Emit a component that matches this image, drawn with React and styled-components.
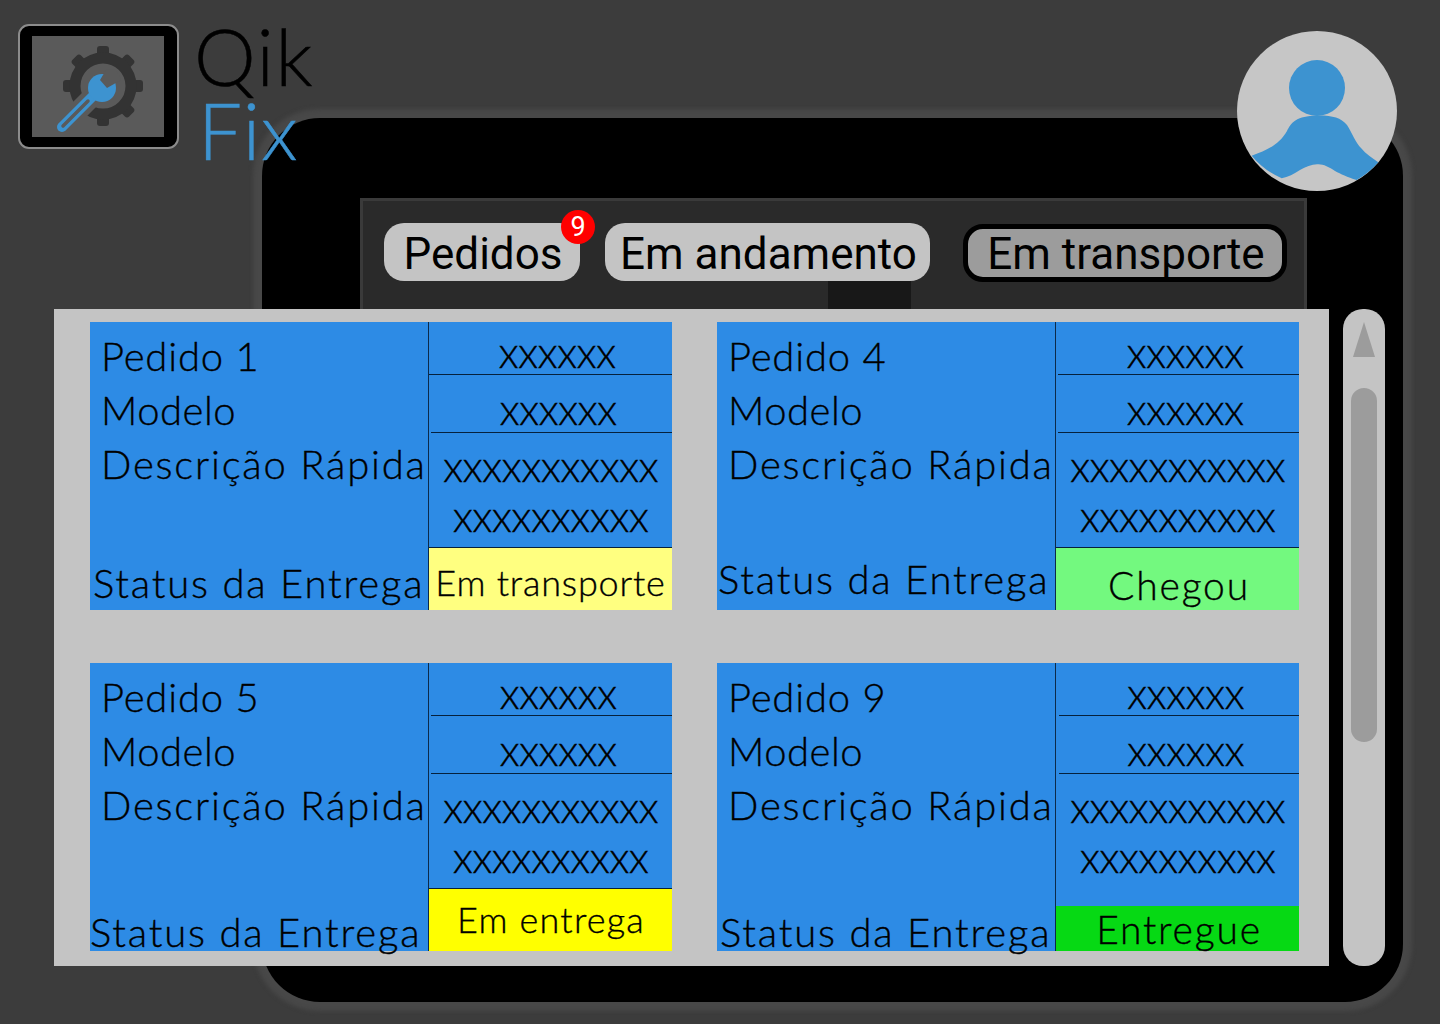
import React from "react";
import styled, { createGlobalStyle } from "styled-components";

const GlobalStyle = createGlobalStyle`
  html, body {
    margin: 0;
    padding: 0;
    background: #3c3c3c;
  }
  * {
    box-sizing: border-box;
  }
`;

const Page = styled.div`
  width: 1440px;
  height: 1024px;
  padding: 24px 43px 0 18px;
  background: #3c3c3c;
  overflow: hidden;
`;

const Header = styled.header`
  position: relative;
  z-index: 2;
  height: 167px;
  display: flex;
  justify-content: space-between;
  align-items: flex-start;
`;

const Brand = styled.div`
  display: flex;
  gap: 15px;
`;

const LogoFrame = styled.div`
  width: 161px;
  height: 125px;
  padding: 10px 13px 10px 12px;
  background: #000;
  border: 2px solid #8c8c8c;
  border-radius: 11px;
`;

const LogoScreen = styled.svg`
  display: block;
  width: 132px;
  height: 101px;
  background: #5a5a5a;
`;

const Wordmark = styled.div`
  font-family: "Lato", sans-serif;
  font-weight: 300;
  font-size: 78px;
  line-height: 74px;
  letter-spacing: 1.6px;
  margin-top: -5px;
  -webkit-text-stroke: 0.5px currentColor;
`;

const WordDark = styled.div`
  color: #000;
`;

const WordBlue = styled.div`
  color: #3d93d0;
  margin-left: 4px;
  letter-spacing: 1px;
`;

const Avatar = styled.svg`
  display: block;
  width: 160px;
  height: 160px;
  margin-top: 7px;
`;

const Device = styled.main`
  position: relative;
  width: 1141px;
  height: 884px;
  margin: -73px 0 0 244px;
  padding-top: 80px;
  background: #000;
  border-radius: 58px;
  box-shadow: 0 0 4px 9px #484848;
`;

const TabPanel = styled.nav`
  position: relative;
  width: 947px;
  height: 111px;
  margin-left: 98px;
  padding: 22px 0 0 21px;
  display: flex;
  align-items: flex-start;
  gap: 25px;
  background: #2a2a2a;
  border: 3px solid #3a3a3a;
  border-bottom: 0;
`;

const PanelStub = styled.div`
  position: absolute;
  left: 465px;
  bottom: 0;
  width: 83px;
  height: 28px;
  background: #181818;
`;

const Tab = styled.div`
  position: relative;
  height: 58px;
  width: ${(p) => p.$width}px;
  margin-left: ${(p) => p.$offset || 0}px;
  margin-top: ${(p) => (p.$active ? 1 : 0)}px;
  padding: ${(p) => (p.$active ? "2px" : "4px")} 0 0 2px;
  display: flex;
  align-items: center;
  justify-content: center;
  border-radius: 20px;
  border: ${(p) => (p.$active ? "5px solid #000" : "0")};
  background: ${(p) => (p.$active ? "#9c9c9c" : "#c4c4c4")};
  color: #000;
  font-family: "Roboto", sans-serif;
  font-size: 44px;
  white-space: nowrap;
`;

const Badge = styled.span`
  position: absolute;
  top: -13px;
  right: -15px;
  width: 34px;
  height: 34px;
  display: flex;
  align-items: center;
  justify-content: center;
  border-radius: 50%;
  background: #f00;
  color: #fff;
  font-size: 27px;
`;

const Workspace = styled.div`
  display: flex;
  gap: 14px;
  margin-left: -208px;
`;

const Board = styled.section`
  width: 1275px;
  height: 657px;
  padding: 13px 30px 15px 36px;
  display: grid;
  grid-template-columns: 582px 582px;
  grid-template-rows: 288px 288px;
  column-gap: 45px;
  row-gap: 53px;
  background: #c4c4c4;
`;

const Card = styled.article`
  display: grid;
  grid-template-columns: 338px 1fr;
  background: #2d8be5;
  color: #000;
  font-family: "Lato", sans-serif;
  font-weight: 300;
  -webkit-text-stroke: 0.35px #000;
`;

const Labels = styled.div`
  position: relative;
  padding: 7px 0 0 11px;
  font-size: 40px;
  line-height: 54px;
  white-space: nowrap;
`;

const LabelLine = styled.div`
  letter-spacing: ${(p) => p.$spacing}px;
`;

const StatusLabel = styled.div`
  position: absolute;
  left: ${(p) => p.$left}px;
  bottom: ${(p) => p.$bottom}px;
  letter-spacing: 1.8px;
`;

const Values = styled.div`
  display: flex;
  flex-direction: column;
  border-left: 1px solid #0c2a4a;
`;

const ValueRow = styled.div`
  height: ${(p) => p.$height}px;
  padding: ${(p) => p.$top}px 0 0 13px;
  margin-left: ${(p) => p.$inset}px;
  border-bottom: 1px solid #06213d;
  text-align: center;
  font-size: 43px;
  line-height: 38px;
  letter-spacing: -0.7px;
`;

const DescRow = styled.div`
  flex: 1;
  padding-top: 8px;
  text-align: center;
  font-size: 43px;
  line-height: 50px;
  letter-spacing: -0.6px;
  border-bottom: ${(p) => (p.$plain ? "0" : "1px solid #06213d")};
`;

const StatusCell = styled.div`
  height: ${(p) => p.$height}px;
  padding-top: ${(p) => p.$top}px;
  padding-left: ${(p) => p.$shift}px;
  background: ${(p) => p.$color};
  text-align: center;
  font-size: ${(p) => p.$size}px;
  line-height: 40px;
  letter-spacing: ${(p) => p.$spacing}px;
  white-space: nowrap;
`;

const Scrollbar = styled.aside`
  width: 42px;
  height: 657px;
  padding: 13px 8px 0;
  display: flex;
  flex-direction: column;
  align-items: center;
  gap: 31px;
  border-radius: 20px;
  background: #c4c4c4;
`;

const ScrollArrow = styled.div`
  width: 0;
  height: 0;
  border-left: 11px solid transparent;
  border-right: 11px solid transparent;
  border-bottom: 35px solid #9c9c9c;
`;

const ScrollThumb = styled.div`
  width: 26px;
  height: 354px;
  border-radius: 13px;
  background: #9c9c9c;
`;

const orders = [
  {
    name: "Pedido 1",
    status: "Em transporte",
    color: "#ffff80",
    height: 62,
    top: 14,
    size: 36,
    spacing: 0.8,
    shift: 0,
    labelLeft: 3,
    labelBottom: 0,
    insets: [0, 2],
  },
  {
    name: "Pedido 4",
    status: "Chegou",
    color: "#73f97f",
    height: 62,
    top: 17,
    size: 39,
    spacing: 1.8,
    shift: 3,
    labelLeft: 1,
    labelBottom: 4,
    insets: [2, 2],
  },
  {
    name: "Pedido 5",
    status: "Em entrega",
    color: "#ffff00",
    height: 62,
    top: 10,
    size: 36,
    spacing: 1.2,
    shift: 1,
    labelLeft: 0,
    labelBottom: -8,
    insets: [2, 2],
  },
  {
    name: "Pedido 9",
    status: "Entregue",
    color: "#06d914",
    height: 45,
    top: 3,
    size: 39,
    spacing: 1.8,
    shift: 3,
    labelLeft: 3,
    labelBottom: -8,
    insets: [3, 3],
    plain: true,
  },
];

const GEAR_TEETH = [0, 45, 90, 135, 180, 225, 270, 315];

const LogoIcon = () => (
  <LogoScreen viewBox="0 0 132 101">
    <g transform="translate(71 50)">
      {GEAR_TEETH.map((angle) => (
        <rect key={angle} x="-6" y="-40" width="12" height="13" rx="3" fill="#333" transform={`rotate(${angle})`} />
      ))}
      <circle r="28" fill="none" stroke="#333" strokeWidth="11" />
    </g>
    <path d="M30 91 L61 60" stroke="#5a5a5a" strokeWidth="20" />
    <path d="M30 91 L62 59" stroke="#3d93d0" strokeWidth="10" strokeLinecap="round" />
    <path d="M31 90 L56 65" stroke="#5a5a5a" strokeWidth="3.5" strokeLinecap="round" />
    <circle cx="70" cy="52" r="14" fill="#3d93d0" />
    <path d="M74 34 L68 44 L75 52 L89 44 L84 33 Z" fill="#5a5a5a" />
  </LogoScreen>
);

const AvatarIcon = () => (
  <Avatar viewBox="0 0 160 160">
    <circle cx="80" cy="80" r="80" fill="#c6c6c6" />
    <circle cx="80" cy="57" r="28" fill="#3d93d0" />
    <path
      d="M14.7 124.7 C30 119 42 114 50 100 C54 92 58 86 76 84.7 C94 84 103 86 110 94 C115 102 119 112 124 117 C129 123 135 127 141.3 131.3 A80 80 0 0 1 119.7 149 C110 146 104 143 98 140 C92 136 86 133 81 133.3 C75 133 69 136 63 139 C57 143 51 146 44.7 147.3 A80 80 0 0 1 14.7 124.7 Z"
      fill="#3d93d0"
    />
  </Avatar>
);

const OrderCard = ({ order }) => (
  <Card>
    <Labels>
      <LabelLine $spacing={0.8}>{order.name}</LabelLine>
      <LabelLine $spacing={0.5}>Modelo</LabelLine>
      <LabelLine $spacing={1.8}>Descrição Rápida</LabelLine>
      <StatusLabel $left={order.labelLeft} $bottom={order.labelBottom}>
        Status da Entrega
      </StatusLabel>
    </Labels>
    <Values>
      <ValueRow $height={53} $top={11} $inset={order.insets[0]}>xxxxxx</ValueRow>
      <ValueRow $height={58} $top={15} $inset={order.insets[1]}>xxxxxx</ValueRow>
      <DescRow $plain={order.plain}>
        <div>xxxxxxxxxxx</div>
        <div>xxxxxxxxxx</div>
      </DescRow>
      <StatusCell
        $color={order.color}
        $height={order.height}
        $top={order.top}
        $size={order.size}
        $spacing={order.spacing}
        $shift={order.shift}
      >
        {order.status}
      </StatusCell>
    </Values>
  </Card>
);

export default function App() {
  return (
    <Page>
      <GlobalStyle />
      <Header>
        <Brand>
          <LogoFrame>
            <LogoIcon />
          </LogoFrame>
          <Wordmark>
            <WordDark>Qik</WordDark>
            <WordBlue>Fix</WordBlue>
          </Wordmark>
        </Brand>
        <AvatarIcon />
      </Header>
      <Device>
        <TabPanel>
          <PanelStub />
          <Tab $width={196}>
            Pedidos
            <Badge>9</Badge>
          </Tab>
          <Tab $width={325}>Em andamento</Tab>
          <Tab $width={324} $offset={8} $active>
            Em transporte
          </Tab>
        </TabPanel>
        <Workspace>
          <Board>
            {orders.map((order) => (
              <OrderCard key={order.name} order={order} />
            ))}
          </Board>
          <Scrollbar>
            <ScrollArrow />
            <ScrollThumb />
          </Scrollbar>
        </Workspace>
      </Device>
    </Page>
  );
}
